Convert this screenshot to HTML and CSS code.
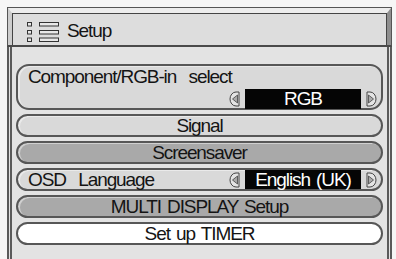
FILE: index.html
```html
<!DOCTYPE html>
<html>
<head>
	<meta charset="utf-8">
	<title>Setup</title>
	<link rel="stylesheet" href="styles.css">
</head>
<body>
	<div class="panel">
		<div class="title">
			<div class="title-bevel">
				<div class="title-face">
					<svg class="title-icon" width="32" height="20" viewBox="0 0 32 20">
						<rect x="0.5" y="0.5" width="4" height="3.5" fill="#e8e8e8" stroke="#333"/>
						<rect x="0.5" y="8.5" width="4" height="3.5" fill="#e8e8e8" stroke="#333"/>
						<rect x="0.5" y="16" width="4" height="3.5" fill="#e8e8e8" stroke="#333"/>
						<rect x="12.5" y="0.5" width="19" height="3.5" fill="#e8e8e8" stroke="#333"/>
						<rect x="12.5" y="8.5" width="19" height="3.5" fill="#e8e8e8" stroke="#333"/>
						<rect x="12.5" y="16" width="19" height="3.5" fill="#e8e8e8" stroke="#333"/>
					</svg>
					<span class="title-text">Setup</span>
				</div>
			</div>
		</div>
		<div class="menu">
			<div class="item tall">
				<div class="label">Component/RGB-in&nbsp; select</div>
				<div class="chooser">
					<svg class="arrow" width="11" height="16" viewBox="0 0 11 16"><path d="M10 1 H7 A6 7 0 0 0 7 15 H10 Z" fill="#e4e4e4" stroke="#444"/><path d="M8.5 4 L3.5 8 L8.5 12 Z" fill="#aaa" stroke="#444" stroke-width="0.8"/></svg>
					<div class="value">RGB</div>
					<svg class="arrow" width="11" height="16" viewBox="0 0 11 16"><path d="M1 1 H4 A6 7 0 0 1 4 15 H1 Z" fill="#e4e4e4" stroke="#444"/><path d="M2.5 4 L7.5 8 L2.5 12 Z" fill="#aaa" stroke="#444" stroke-width="0.8"/></svg>
				</div>
			</div>
			<div class="item">Signal</div>
			<div class="item dark">Screensaver</div>
			<div class="item split">
				<span class="label">OSD&nbsp; Language</span>
				<div class="chooser">
					<svg class="arrow" width="11" height="16" viewBox="0 0 11 16"><path d="M10 1 H7 A6 7 0 0 0 7 15 H10 Z" fill="#e4e4e4" stroke="#444"/><path d="M8.5 4 L3.5 8 L8.5 12 Z" fill="#aaa" stroke="#444" stroke-width="0.8"/></svg>
					<div class="value">English (UK)</div>
					<svg class="arrow" width="11" height="16" viewBox="0 0 11 16"><path d="M1 1 H4 A6 7 0 0 1 4 15 H1 Z" fill="#e4e4e4" stroke="#444"/><path d="M2.5 4 L7.5 8 L2.5 12 Z" fill="#aaa" stroke="#444" stroke-width="0.8"/></svg>
				</div>
			</div>
			<div class="item dark">MULTI DISPLAY Setup</div>
			<div class="item active">Set up TIMER</div>
		</div>
	</div>
</body>
</html>
```

FILE: styles.css
```css
html{background: #f6f6f6;}
body{margin: 0; height: 259px; overflow: hidden; font-family: 'Liberation Sans', Arial, Helvetica, sans-serif; font-size: 19px; color: #141414; letter-spacing: -1.1px; word-spacing: 2px;}
.panel{margin: 7px 0 0 7px; width: 385px;}
.title{border: 1px solid #555; border-bottom: 2px solid #4a4a4a;}
.title-bevel{border-style: solid; border-width: 5px 4px 0 4px; border-color: #ededed #8e8e8e transparent #cdcdcd;}
.title-face{display: flex; align-items: center; height: 31px; padding-left: 14px; border: 1px solid #444; border-bottom: 0; background: #dddddd;}
.title-icon{margin: 4px 8px 0 0;}
.title-text{line-height: 31px; margin-top: 1px;}
.menu{display: flex; flex-direction: column; gap: 4px; height: 260px; padding: 17px 4px 0 4px; box-sizing: border-box; border-left: 5px double #5a5a5a; border-right: 5px double #5a5a5a; background: #e3e3e3;}
.item{box-sizing: border-box; height: 23px; line-height: 19px; border: 2px solid #575757; border-radius: 12px; background: #d9d9d9; text-align: center; box-shadow: inset 2px 1px 0 rgba(255,255,255,.45);}
.dark{background: #a9a9a9;}
.active{background: #fff;}
.tall{height: 46px; padding: 1px 4px 0 10px; text-align: left; border-radius: 13px;}
.split{display: flex; justify-content: space-between; align-items: center; padding: 0 4px 0 10px;}
.chooser{display: flex; justify-content: flex-end; align-items: center; gap: 5px;}
.tall .chooser{margin-top: 3px;}
.arrow{display: block;}
.value{width: 116px; height: 20px; line-height: 20px; background: #050505; color: #fff; text-align: center;}
.split .value{height: 19px; line-height: 19px;}
```
